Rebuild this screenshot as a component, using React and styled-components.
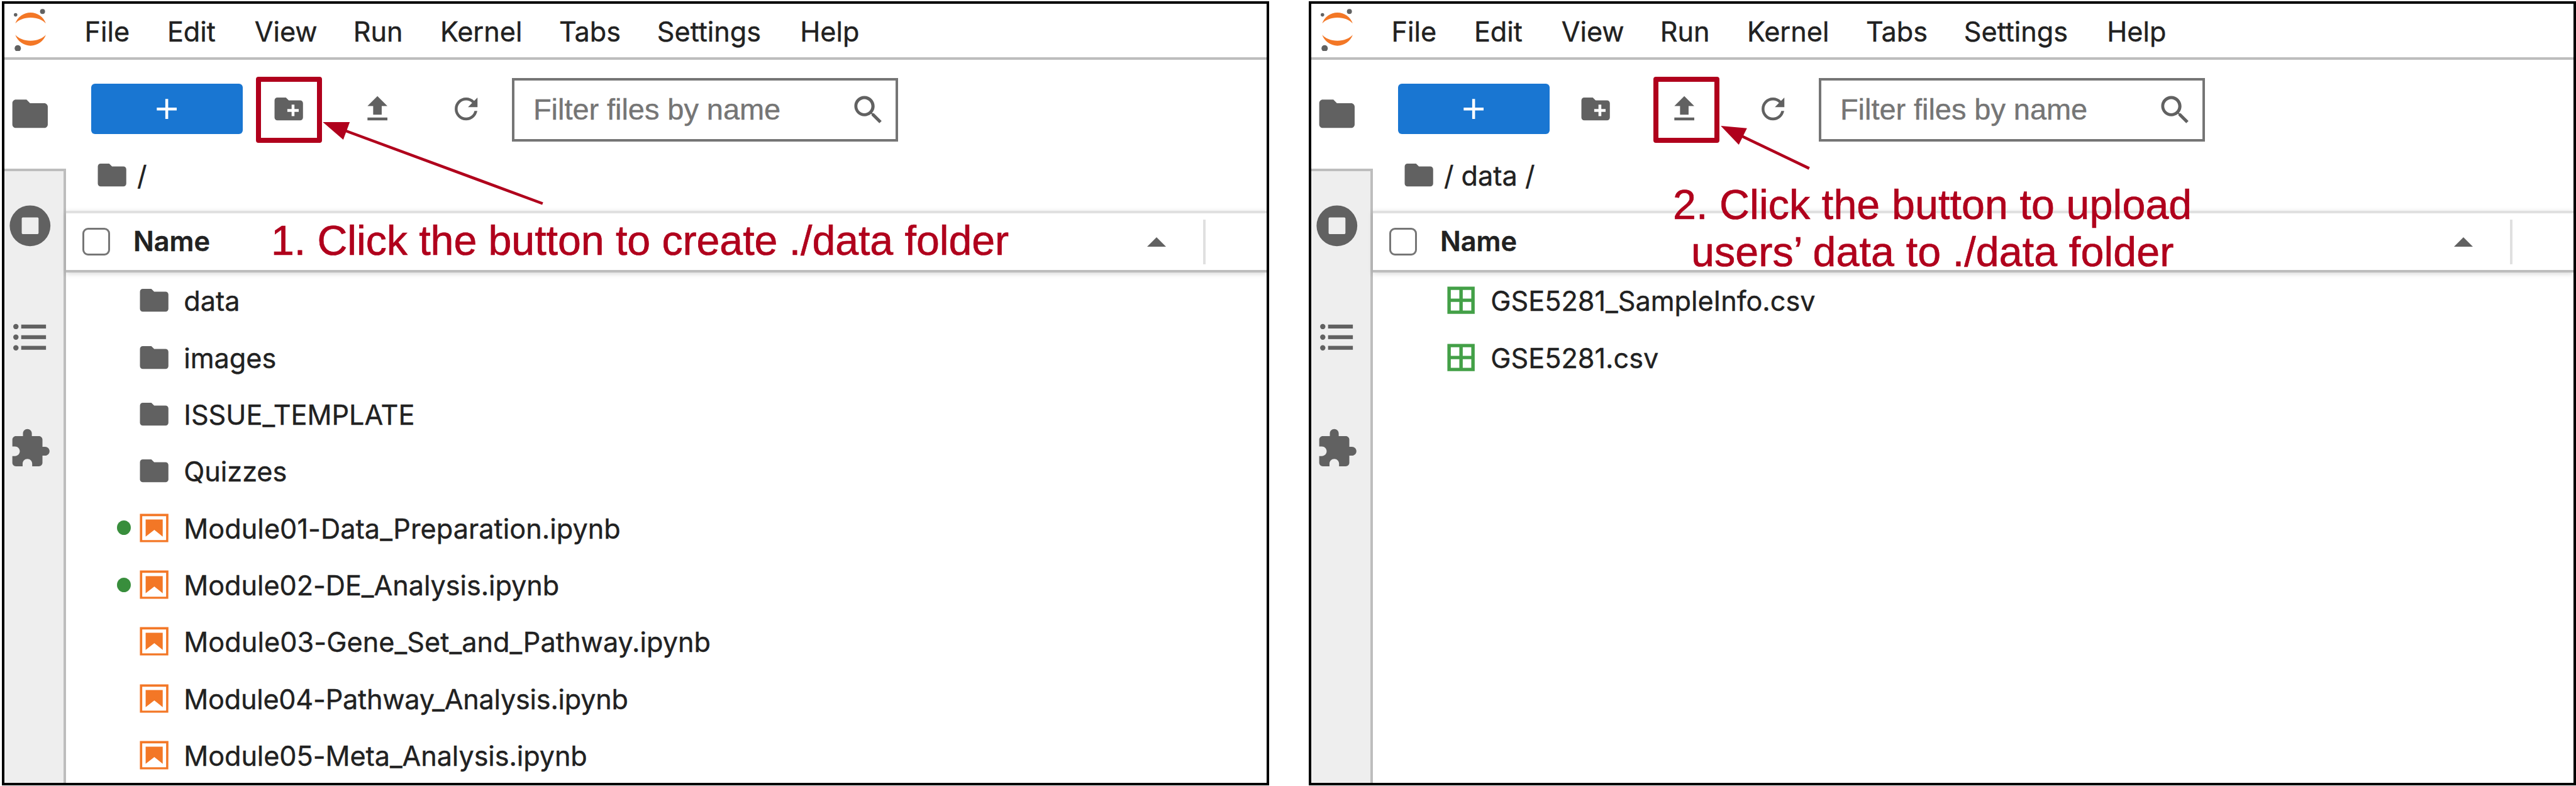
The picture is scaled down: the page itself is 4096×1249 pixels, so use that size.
import React from "react";
import styled, { createGlobalStyle } from "styled-components";

const GlobalStyle = createGlobalStyle`
  *, *::before, *::after { box-sizing: border-box; }
  body { margin: 0; background: #fff; overflow: hidden; }
`;

const Page = styled.main`
  display: flex;
  gap: 63px;
  width: 4096px;
  height: 1249px;
  padding: 2px 0 1px 3px;
  font-family: Inter, "Liberation Sans", sans-serif;
  font-size: 43.2px;
  color: #212121;
  -webkit-text-stroke: 0.4px currentColor;
`;

const Panel = styled.section`
  position: relative;
  display: flex;
  flex-direction: column;
  width: 2015px;
  height: 1246px;
  border: 4px solid #000;
  background: #fff;
  overflow: hidden;
`;

const MenuBar = styled.nav`
  display: flex;
  align-items: center;
  flex: none;
  height: 89px;
  border-bottom: 4px solid #bdbdbd;
`;

const LogoSlot = styled.div`
  display: flex;
  flex: none;
  width: 127.5px;
  padding: 0 0 2px 15px;
`;

const MenuItem = styled.span`
  flex: 0 0 ${(p) => p.$width}px;
  padding-top: 3.6px;
  line-height: 52px;
  white-space: nowrap;
`;

const Body = styled.div`
  display: flex;
  flex: 1;
  min-height: 0;
`;

const Rail = styled.aside`
  display: flex;
  flex-direction: column;
  flex: none;
  width: 98px;
`;

const ActiveTab = styled.div`
  flex: none;
  height: 173px;
  padding: 52.4px 0 0 6.8px;
`;

const RailTabs = styled.div`
  display: flex;
  flex-direction: column;
  gap: 109.7px;
  flex: 1;
  padding: 52.8px 0 0 6.8px;
  border: solid #bdbdbd;
  border-width: 4px 4px 0 0;
  background: #eee;
`;

const Main = styled.div`
  display: flex;
  flex-direction: column;
  flex: 1;
  min-width: 0;
`;

const Toolbar = styled.div`
  display: flex;
  align-items: center;
  flex: none;
  height: 101px;
  margin-top: 29px;
  padding-left: 39.6px;
`;

const NewButton = styled.button`
  display: flex;
  align-items: center;
  justify-content: center;
  width: 241px;
  height: 80px;
  margin: 0 21.5px 3px 0;
  padding: 0;
  border: 0;
  border-radius: 6px;
  background: #1976d2;
  color: #fff;
`;

const ToolButton = styled.button`
  display: flex;
  align-items: center;
  justify-content: center;
  width: 105px;
  height: 80px;
  margin: 0 35.6px 3px 0;
  padding: 0;
  border: 0;
  background: none;
  color: #616161;

  &:last-of-type { margin-right: 20.7px; }
`;

const SearchBox = styled.label`
  display: flex;
  align-items: center;
  justify-content: space-between;
  width: 614px;
  height: 101px;
  padding: 0 17px 0 30px;
  border: 4px solid #757575;
  font-family: "Liberation Sans", Arial, sans-serif;
  font-size: 47px;
  letter-spacing: -0.06px;
  color: #757575;
`;

const Placeholder = styled.span`
  padding-bottom: 2px;
  line-height: 54px;
  white-space: nowrap;
`;

const Breadcrumbs = styled.div`
  display: flex;
  align-items: center;
  flex: none;
  height: 110px;
  padding: 0 0 3px 46.2px;
  white-space: pre;
`;

const CrumbPath = styled.span`
  margin-left: 12.4px;
  line-height: 52px;
`;

const ListHeader = styled.div`
  display: flex;
  align-items: center;
  flex: none;
  height: 98px;
  padding: 0 97px 0 26.4px;
  border-top: 4px solid #e0e0e0;
  border-bottom: 4px solid #bdbdbd;
  box-shadow: 0 2px 8px rgba(0, 0, 0, 0.16);
  font-weight: 600;
`;

const Checkbox = styled.span`
  width: 43.4px;
  height: 43.4px;
  border: 3px solid #767676;
  border-radius: 9px;
  background: #fff;
`;

const HeaderName = styled.span`
  margin-left: 37.2px;
  padding-bottom: 2px;
  line-height: 52px;
`;

const SortArrow = styled.svg`
  width: 30px;
  height: 15px;
  margin: 0 59px 0 auto;
  fill: #616161;
`;

const ColumnDivider = styled.span`
  width: 4px;
  height: 71px;
  background: #e0e0e0;
`;

const FileList = styled.ul`
  display: flex;
  flex-direction: column;
  margin: -0.8px 0 0;
  padding: 0;
  list-style: none;
`;

const FileRow = styled.li`
  display: flex;
  align-items: center;
  flex: none;
  height: 90.39px;
  padding-left: 81.4px;
`;

const RunningDot = styled.span`
  width: 22px;
  height: 23px;
  margin-right: 9.6px;
  border-radius: 50%;
  background: ${(p) => (p.$on ? "#388e3c" : "transparent")};
`;

const FileName = styled.span`
  margin-left: 20px;
  padding-top: 1.6px;
  line-height: 52px;
  letter-spacing: ${(p) => p.$tracking || 0}px;
  white-space: nowrap;
`;

const Icon = styled.svg`
  display: block;
  flex: none;
  width: ${(p) => p.$size || 54.3}px;
  height: ${(p) => p.$size || 54.3}px;
  fill: ${(p) => p.$color || "#616161"};
`;

const Logo = styled.svg`
  display: block;
  width: 51.9px;
  height: 67.9px;
`;

const Highlight = styled.div`
  position: absolute;
  top: 115.6px;
  left: ${(p) => p.$left}px;
  width: 105px;
  height: 105px;
  border: 8px solid #b0001c;
  border-radius: 4px;
`;

const Arrow = styled.svg`
  position: absolute;
  inset: 0;
  width: 2007px;
  height: 1238px;
  fill: #b0001c;
  stroke: #b0001c;
  pointer-events: none;
`;

const Callout = styled.p`
  position: absolute;
  top: ${(p) => p.$top}px;
  left: ${(p) => p.$left}px;
  margin: 0;
  font-family: "Liberation Sans", Arial, sans-serif;
  font-size: 66.3px;
  letter-spacing: ${(p) => p.$tracking || 0}px;
  line-height: 75.2px;
  text-align: center;
  white-space: pre;
  color: #b0001c;
  -webkit-text-stroke: 0.7px #b0001c;
`;

const FOLDER = "M10 4H4c-1.1 0-1.99.9-1.99 2L2 18c0 1.1.9 2 2 2h16c1.1 0 2-.9 2-2V8c0-1.1-.9-2-2-2h-8l-2-2z";

const FolderIcon = ({ size }) => (
  <Icon viewBox="0 0 24 24" $size={size}><path d={FOLDER} /></Icon>
);

const AddIcon = () => (
  <Icon viewBox="0 0 24 24" $color="#fff"><path d="M19 13h-6v6h-2v-6H5v-2h6V5h2v6h6v2z" /></Icon>
);

const NewFolderIcon = () => (
  <Icon viewBox="0 0 24 24">
    <path d="M20 6h-8l-2-2H4c-1.11 0-1.99.89-1.99 2L2 18c0 1.11.89 2 2 2h16c1.11 0 2-.89 2-2V8c0-1.11-.89-2-2-2zm-1 8h-3v3h-2v-3h-3v-2h3V9h2v3h3v2z" />
  </Icon>
);

const UploadIcon = () => (
  <Icon viewBox="0 0 24 24"><path d="M9 16h6v-6h4l-7-7-7 7h4zm-4 2h14v2H5z" /></Icon>
);

const RefreshIcon = () => (
  <Icon viewBox="0 0 18 18">
    <path d="M9 13.5c-2.49 0-4.5-2.01-4.5-4.5S6.51 4.5 9 4.5c1.24 0 2.36.52 3.17 1.33L10 8h5V3l-1.76 1.76C12.15 3.68 10.66 3 9 3 5.69 3 3.01 5.69 3.01 9S5.69 15 9 15c2.97 0 5.43-2.16 5.9-5h-1.52c-.46 2-2.24 3.5-4.38 3.5z" />
  </Icon>
);

const SearchIcon = () => (
  <Icon viewBox="0 0 18 18">
    <path d="M12.1 10.9h-.7l-.2-.2c.8-.9 1.3-2.2 1.3-3.5 0-3-2.4-5.4-5.4-5.4S1.8 4.2 1.8 7.1s2.4 5.4 5.4 5.4c1.3 0 2.5-.5 3.5-1.3l.2.2v.7l4.1 4.1 1.2-1.2-4.1-4.1zm-5 0c-2.1 0-3.7-1.7-3.7-3.7s1.7-3.7 3.7-3.7 3.7 1.7 3.7 3.7-1.6 3.7-3.7 3.7z" />
  </Icon>
);

const RunningIcon = () => (
  <Icon viewBox="0 0 24 24" $size={67.6}>
    <path fillRule="evenodd" d="M12 .5a11.5 11.5 0 1 0 0 23a11.5 11.5 0 1 0 0-23zM7.9 7.3h8.3a.6.6 0 0 1 .6.6v8.2a.6.6 0 0 1-.6.6H7.9a.6.6 0 0 1-.6-.6V7.9a.6.6 0 0 1 .6-.6z" />
  </Icon>
);

const TocIcon = () => (
  <Icon viewBox="0 0 24 24" $size={67.6}>
    {[6, 12, 18].map((y) => (
      <g key={y}>
        <circle cx="4" cy={y} r="1.5" />
        <rect x="7" y={y - 1.1} width="14" height="2.2" />
      </g>
    ))}
  </Icon>
);

const ExtensionIcon = () => (
  <Icon viewBox="0 0 24 24" $size={67.6}>
    <path d="M20.5 11H19V7c0-1.1-.9-2-2-2h-4V3.5C13 2.12 11.88 1 10.5 1S8 2.12 8 3.5V5H4c-1.1 0-1.99.9-1.99 2v3.8H3.5c1.49 0 2.7 1.21 2.7 2.7s-1.21 2.7-2.7 2.7H2V20c0 1.1.9 2 2 2h3.8v-1.5c0-1.49 1.21-2.7 2.7-2.7 1.49 0 2.7 1.21 2.7 2.7V22H17c1.1 0 2-.9 2-2v-4h1.5c1.38 0 2.5-1.12 2.5-2.5S21.88 11 20.5 11z" />
  </Icon>
);

const NotebookIcon = () => (
  <Icon viewBox="0 0 22 22" $color="#f37726">
    <path d="M18.7 3.3v15.4H3.3V3.3h15.4m1.5-1.5H1.8v18.3h18.3l.1-18.3z" />
    <path d="M16.5 16.5l-5.4-4.3-5.6 4.3v-11h11z" />
  </Icon>
);

const CsvIcon = () => (
  <Icon viewBox="0 0 22 22" $color="#43a047">
    <path d="M2.2 2.2v17.6h17.6V2.2H2.2zm15.4 7.7h-5.5V4.4h5.5v5.5zM9.9 4.4v5.5H4.4V4.4h5.5zm-5.5 7.7h5.5v5.5H4.4v-5.5zm7.7 5.5v-5.5h5.5v5.5h-5.5z" />
  </Icon>
);

const JupyterLogo = () => (
  <Logo viewBox="0 0 39 51">
    <g fill="#f37726">
      <path transform="translate(1.74 30.98)" d="M18.2646 7.13411C10.4145 7.13411 3.55872 4.2576 0 0C1.32539 3.8204 3.79556 7.13081 7.0686 9.47303C10.3417 11.8152 14.2557 13.0734 18.269 13.0734C22.2823 13.0734 26.1963 11.8152 29.4694 9.47303C32.7424 7.13081 35.2126 3.8204 36.538 0C32.9705 4.2576 26.1148 7.13411 18.2646 7.13411Z" />
      <path transform="translate(1.73 4.48)" d="M18.2733 5.93931C26.1235 5.93931 32.9793 8.81583 36.538 13.0734C35.2126 9.25303 32.7424 5.94262 29.4694 3.6004C26.1963 1.25818 22.2823 0 18.269 0C14.2557 0 10.3417 1.25818 7.0686 3.6004C3.79556 5.94262 1.32539 9.25303 0 13.0734C3.56745 8.82463 10.4232 5.93931 18.2733 5.93931Z" />
    </g>
    <g fill="#616161">
      <circle cx="34.3" cy="3.2" r="3" />
      <circle cx="2.1" cy="7.2" r="2.1" />
      <circle cx="4.7" cy="47.2" r="3.8" />
    </g>
  </Logo>
);

const FILE_ICONS = { folder: FolderIcon, notebook: NotebookIcon, csv: CsvIcon };

const MENU = [
  ["File", 131.4], ["Edit", 138.8], ["View", 157], ["Run", 138.2],
  ["Kernel", 189], ["Tabs", 155.9], ["Settings", 227.5], ["Help", 100],
];

const ROOT_FILES = [
  { kind: "folder", name: "data" },
  { kind: "folder", name: "images" },
  { kind: "folder", name: "ISSUE_TEMPLATE" },
  { kind: "folder", name: "Quizzes" },
  { kind: "notebook", name: "Module01-Data_Preparation.ipynb", tracking: 0.05, running: true },
  { kind: "notebook", name: "Module02-DE_Analysis.ipynb", tracking: -0.05, running: true },
  { kind: "notebook", name: "Module03-Gene_Set_and_Pathway.ipynb", tracking: 0.06 },
  { kind: "notebook", name: "Module04-Pathway_Analysis.ipynb", tracking: -0.24 },
  { kind: "notebook", name: "Module05-Meta_Analysis.ipynb", tracking: -0.08 },
];

const DATA_FILES = [
  { kind: "csv", name: "GSE5281_SampleInfo.csv" },
  { kind: "csv", name: "GSE5281.csv" },
];

function FileBrowser({ path, files, children }) {
  return (
    <Panel>
      <MenuBar>
        <LogoSlot><JupyterLogo /></LogoSlot>
        {MENU.map(([label, width]) => (
          <MenuItem key={label} $width={width}>{label}</MenuItem>
        ))}
      </MenuBar>
      <Body>
        <Rail>
          <ActiveTab><FolderIcon size={67.6} /></ActiveTab>
          <RailTabs>
            <RunningIcon />
            <TocIcon />
            <ExtensionIcon />
          </RailTabs>
        </Rail>
        <Main>
          <Toolbar>
            <NewButton><AddIcon /></NewButton>
            <ToolButton><NewFolderIcon /></ToolButton>
            <ToolButton><UploadIcon /></ToolButton>
            <ToolButton><RefreshIcon /></ToolButton>
            <SearchBox>
              <Placeholder>Filter files by name</Placeholder>
              <SearchIcon />
            </SearchBox>
          </Toolbar>
          <Breadcrumbs>
            <FolderIcon />
            <CrumbPath>{path}</CrumbPath>
          </Breadcrumbs>
          <ListHeader>
            <Checkbox />
            <HeaderName>Name</HeaderName>
            <SortArrow viewBox="0 0 30 15"><path d="M15 0l15 15H0z" /></SortArrow>
            <ColumnDivider />
          </ListHeader>
          <FileList>
            {files.map(({ kind, name, running, tracking }) => {
              const Glyph = FILE_ICONS[kind];
              return (
                <FileRow key={name}>
                  <RunningDot $on={running} />
                  <Glyph />
                  <FileName $tracking={tracking}>{name}</FileName>
                </FileRow>
              );
            })}
          </FileList>
        </Main>
      </Body>
      {children}
    </Panel>
  );
}

export default function App() {
  return (
    <>
      <GlobalStyle />
      <Page>
        <FileBrowser path="/" files={ROOT_FILES}>
          <Highlight $left={400} />
          <Arrow viewBox="0 0 2007 1238">
            <path stroke="none" d="M506.3 187.9L549.2 188.1L538.8 216z" />
            <path fill="none" strokeWidth="4.5" d="M543 202L855.9 317.5" />
          </Arrow>
          <Callout $top={338.5} $left={424} $tracking={-0.06}>1. Click the button to create ./data folder</Callout>
        </FileBrowser>
        <FileBrowser path="/ data /" files={DATA_FILES}>
          <Highlight $left={543.6} />
          <Arrow viewBox="0 0 2007 1238">
            <path stroke="none" d="M651.1 193.9L692.8 197.8L679.8 224z" />
            <path fill="none" strokeWidth="4.5" d="M685 210.5L791.8 261.6" />
          </Arrow>
          <Callout $top={281.5} $left={575} $tracking={0.12}>{"2. Click the button to upload\nusers’ data to ./data folder"}</Callout>
        </FileBrowser>
      </Page>
    </>
  );
}
